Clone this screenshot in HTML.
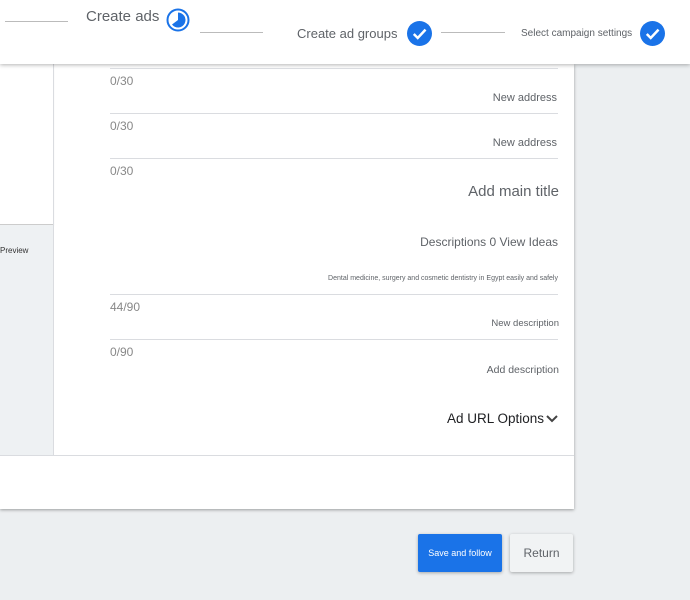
<!DOCTYPE html>
<html><head><style>
body{margin:0;width:690px;height:600px;background:#eceff1;font-family:"Liberation Sans",sans-serif;position:relative;overflow:hidden}
.a{position:absolute}
.t{position:absolute;white-space:nowrap;color:#5f6368}
.hl{position:absolute;height:1px;background:#dadce0}
</style></head><body>
<div class="a" style="left:0;top:64px;width:574px;height:445px;background:#fff;box-shadow:0 1px 3px rgba(0,0,0,.35)"></div>
<div class="a" style="left:0;top:64px;width:53px;height:160px;background:#fff;border-bottom:1px solid #ccc;box-shadow:0 1px 2px rgba(0,0,0,.15)"></div>
<div class="a" style="left:0;top:225px;width:53px;height:230px;background:#eef1f3"></div>
<div class="a" style="left:53px;top:64px;width:1px;height:391px;background:#dadce0"></div>
<div class="hl" style="left:0;top:455px;width:574px"></div>
<div class="t" style="left:0;top:246px;font-size:8px;color:#333">Preview</div>

<div class="a" style="left:0;top:0;width:690px;height:64px;background:#fff;box-shadow:0 1px 4px rgba(0,0,0,.3)"></div>
<div class="hl" style="left:5px;top:21px;width:63px;background:#bbb"></div>
<div class="t" style="left:86px;top:8px;font-size:15px;color:#5f6368">Create ads</div>
<svg class="a" style="left:166px;top:8px" width="24" height="24" viewBox="0 0 24 24"><circle cx="12" cy="12" r="10.5" fill="none" stroke="#1a73e8" stroke-width="2"/><path d="M12 4.5A7.5 7.5 0 1 1 6 16.5L12 12Z" fill="#1a73e8"/></svg>
<div class="hl" style="left:200px;top:32px;width:63px;background:#bbb"></div>
<div class="t" style="left:297px;top:26px;font-size:13px">Create ad groups</div>
<svg class="a" style="left:407px;top:21px" width="25" height="25" viewBox="0 0 24 24"><circle cx="12" cy="12" r="12" fill="#1a73e8"/><path d="M6.5 12.5l3.8 3.8 7.5-8" fill="none" stroke="#fff" stroke-width="2.4"/></svg>
<div class="hl" style="left:441px;top:32px;width:64px;background:#bbb"></div>
<div class="t" style="left:521px;top:28px;font-size:10px">Select campaign settings</div>
<svg class="a" style="left:640px;top:21px" width="25" height="25" viewBox="0 0 24 24"><circle cx="12" cy="12" r="12" fill="#1a73e8"/><path d="M6.5 12.5l3.8 3.8 7.5-8" fill="none" stroke="#fff" stroke-width="2.4"/></svg>

<div class="hl" style="left:110px;top:68px;width:448px"></div>
<div class="t" style="left:110px;top:74px;font-size:12px;color:#888">0/30</div>
<div class="t" style="right:133px;top:92px;font-size:11px">New address</div>
<div class="hl" style="left:110px;top:113px;width:448px"></div>
<div class="t" style="left:110px;top:119px;font-size:12px;color:#888">0/30</div>
<div class="t" style="right:133px;top:137px;font-size:11px">New address</div>
<div class="hl" style="left:110px;top:158px;width:448px"></div>
<div class="t" style="left:110px;top:164px;font-size:12px;color:#888">0/30</div>
<div class="t" style="right:131px;top:183px;font-size:15px">Add main title</div>
<div class="t" style="right:132px;top:235px;font-size:12px">Descriptions 0 View Ideas</div>
<div class="t" style="right:132px;top:275px;font-size:7px">Dental medicine, surgery and cosmetic dentistry in Egypt easily and safely</div>
<div class="hl" style="left:110px;top:294px;width:448px"></div>
<div class="t" style="left:110px;top:300px;font-size:12px;color:#888">44/90</div>
<div class="t" style="right:131px;top:318px;font-size:9.5px">New description</div>
<div class="hl" style="left:110px;top:339px;width:448px"></div>
<div class="t" style="left:110px;top:345px;font-size:12px;color:#888">0/90</div>
<div class="t" style="right:131px;top:364px;font-size:10.5px">Add description</div>
<div class="t" style="left:447px;top:411px;font-size:13.5px;color:#202124">Ad URL Options</div>
<svg class="a" style="left:545px;top:413px" width="14" height="12" viewBox="0 0 14 12"><path d="M2 3l5 5 5-5" fill="none" stroke="#444" stroke-width="2"/></svg>

<div class="a" style="left:418px;top:534px;width:84px;height:38px;background:#1a73e8;border-radius:2px;box-shadow:0 1px 3px rgba(0,0,0,.3);color:#fff;font-size:9px;line-height:38px;text-align:center">Save and follow</div>
<div class="a" style="left:510px;top:534px;width:63px;height:38px;background:#f1f3f4;border-radius:2px;box-shadow:0 1px 3px rgba(0,0,0,.3);color:#5f6368;font-size:12px;line-height:38px;text-align:center">Return</div>
</body></html>
